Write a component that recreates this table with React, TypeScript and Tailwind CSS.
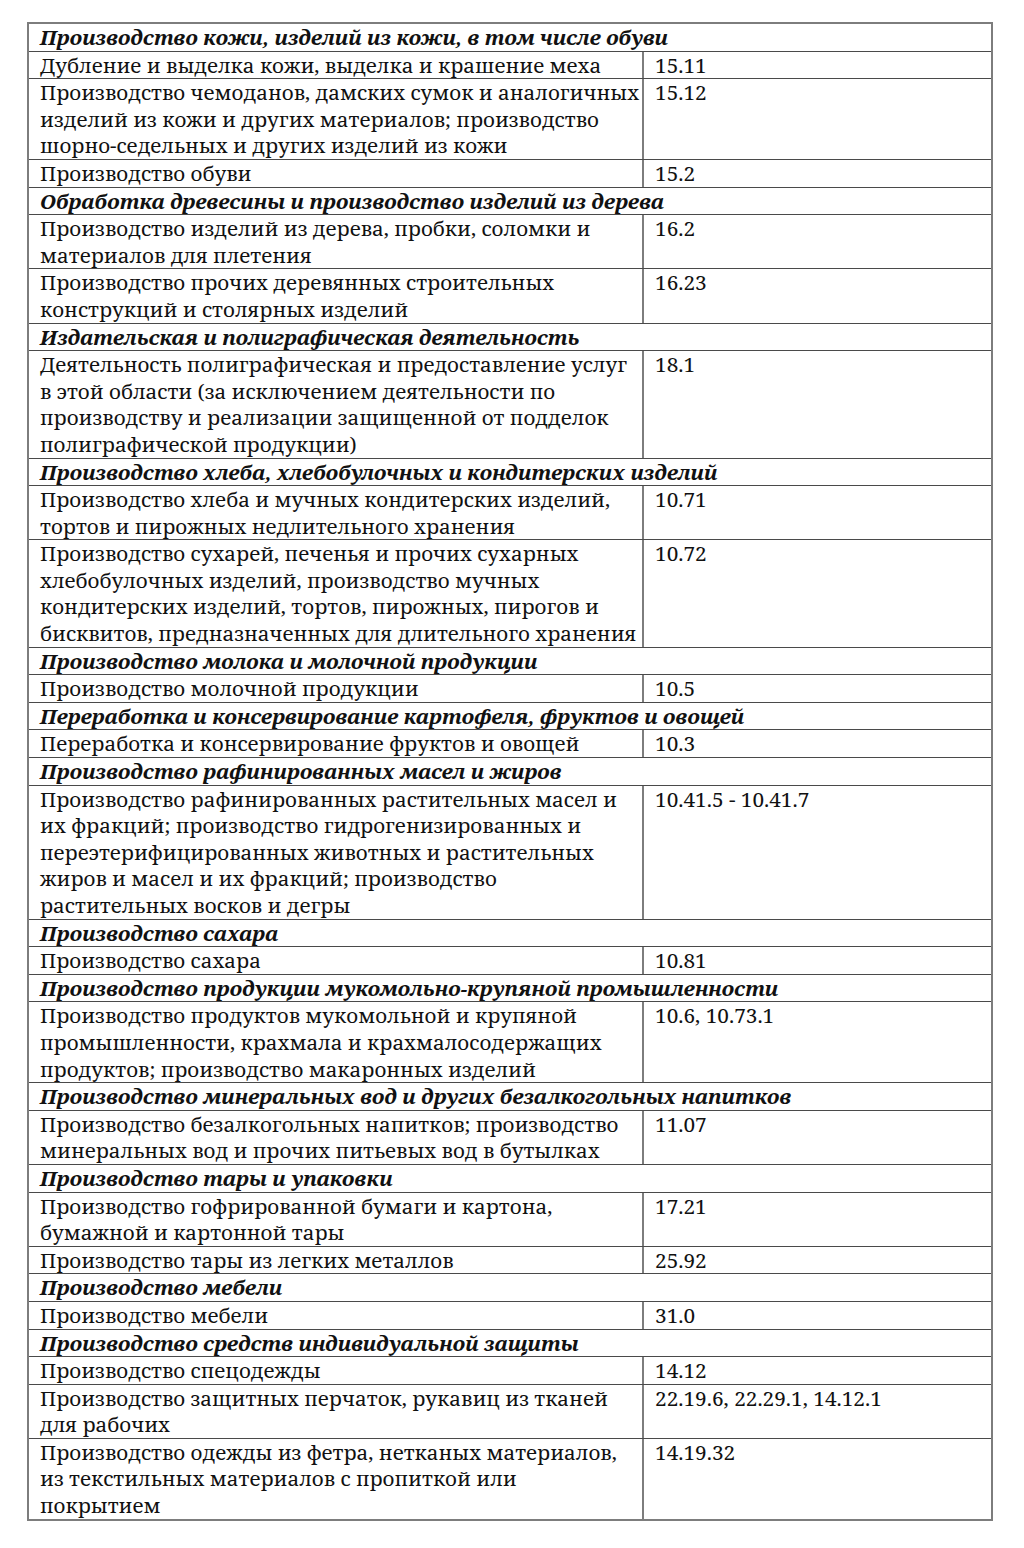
type Row = { h: string } | { l: string[]; c: string };

const rows: Row[] = [
  { h: "Производство кожи, изделий из кожи, в том числе обуви" },
  { l: ["Дубление и выделка кожи, выделка и крашение меха"], c: "15.11" },
  {
    l: [
      "Производство чемоданов, дамских сумок и аналогичных",
      "изделий из кожи и других материалов; производство",
      "шорно-седельных и других изделий из кожи",
    ],
    c: "15.12",
  },
  { l: ["Производство обуви"], c: "15.2" },
  { h: "Обработка древесины и производство изделий из дерева" },
  { l: ["Производство изделий из дерева, пробки, соломки и", "материалов для плетения"], c: "16.2" },
  { l: ["Производство прочих деревянных строительных", "конструкций и столярных изделий"], c: "16.23" },
  { h: "Издательская и полиграфическая деятельность" },
  {
    l: [
      "Деятельность полиграфическая и предоставление услуг",
      "в этой области (за исключением деятельности по",
      "производству и реализации защищенной от подделок",
      "полиграфической продукции)",
    ],
    c: "18.1",
  },
  { h: "Производство хлеба, хлебобулочных и кондитерских изделий" },
  { l: ["Производство хлеба и мучных кондитерских изделий,", "тортов и пирожных недлительного хранения"], c: "10.71" },
  {
    l: [
      "Производство сухарей, печенья и прочих сухарных",
      "хлебобулочных изделий, производство мучных",
      "кондитерских изделий, тортов, пирожных, пирогов и",
      "бисквитов, предназначенных для длительного хранения",
    ],
    c: "10.72",
  },
  { h: "Производство молока и молочной продукции" },
  { l: ["Производство молочной продукции"], c: "10.5" },
  { h: "Переработка и консервирование картофеля, фруктов и овощей" },
  { l: ["Переработка и консервирование фруктов и овощей"], c: "10.3" },
  { h: "Производство рафинированных масел и жиров" },
  {
    l: [
      "Производство рафинированных растительных масел и",
      "их фракций; производство гидрогенизированных и",
      "переэтерифицированных животных и растительных",
      "жиров и масел и их фракций; производство",
      "растительных восков и дегры",
    ],
    c: "10.41.5 - 10.41.7",
  },
  { h: "Производство сахара" },
  { l: ["Производство сахара"], c: "10.81" },
  { h: "Производство продукции мукомольно-крупяной промышленности" },
  {
    l: [
      "Производство продуктов мукомольной и крупяной",
      "промышленности, крахмала и крахмалосодержащих",
      "продуктов; производство макаронных изделий",
    ],
    c: "10.6, 10.73.1",
  },
  { h: "Производство минеральных вод и других безалкогольных напитков" },
  {
    l: ["Производство безалкогольных напитков; производство", "минеральных вод и прочих питьевых вод в бутылках"],
    c: "11.07",
  },
  { h: "Производство тары и упаковки" },
  { l: ["Производство гофрированной бумаги и картона,", "бумажной и картонной тары"], c: "17.21" },
  { l: ["Производство тары из легких металлов"], c: "25.92" },
  { h: "Производство мебели" },
  { l: ["Производство мебели"], c: "31.0" },
  { h: "Производство средств индивидуальной защиты" },
  { l: ["Производство спецодежды"], c: "14.12" },
  { l: ["Производство защитных перчаток, рукавиц из тканей", "для рабочих"], c: "22.19.6, 22.29.1, 14.12.1" },
  {
    l: [
      "Производство одежды из фетра, нетканых материалов,",
      "из текстильных материалов с пропиткой или",
      "покрытием",
    ],
    c: "14.19.32",
  },
];

export default function App() {
  return (
    <div className="min-h-[1548px] bg-white pl-[27px] pt-[22px]">
      <div
        className="w-[966px] border-2 border-[#7d7d7d] text-[#111] text-[21px] leading-[26.6px]"
        style={{ fontFamily: "'Noto Serif', 'DejaVu Serif Condensed', 'Liberation Serif', serif" }}
      >
        {rows.map((r, i) => {
          const last = i === rows.length - 1;
          const border = last ? "" : "border-b border-[#4a4a4a]";
          if ("h" in r) {
            return (
              <div key={i} className={`${border} pl-[11px] whitespace-nowrap font-bold italic text-[20.8px]`}>
                {r.h}
              </div>
            );
          }
          return (
            <div key={i} className={`${border} grid grid-cols-[613px_1fr]`}>
              <div className="pl-[11px] whitespace-nowrap text-[20.6px]">
                {r.l.map((t, j) => (
                  <div key={j}>{t}</div>
                ))}
              </div>
              <div className="border-l-2 border-[#7d7d7d] pl-[11px] whitespace-nowrap text-[20.8px]">{r.c}</div>
            </div>
          );
        })}
      </div>
    </div>
  );
}
